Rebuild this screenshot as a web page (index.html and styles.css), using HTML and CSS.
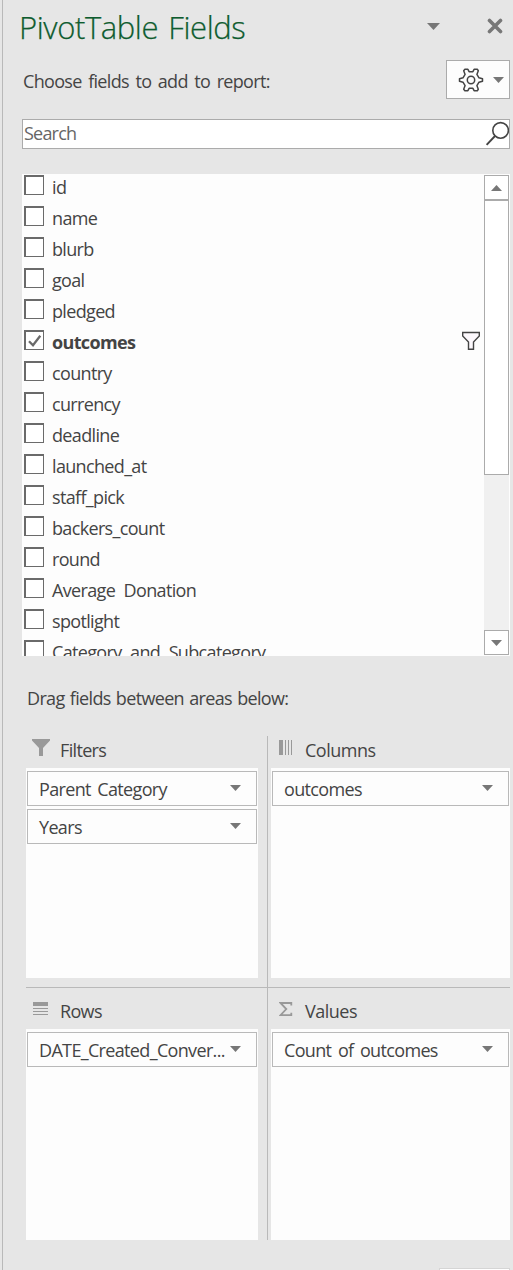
FILE: index.html
```html
<!DOCTYPE html>
<html lang="en">
<head>
<meta charset="utf-8">
<title>PivotTable Fields</title>
<link rel="stylesheet" href="styles.css">
</head>
<body>
<main class="pane">
  <header class="head">
    <h1 class="title">PivotTable Fields</h1>
    <svg class="head-arrow" width="14" height="7" viewBox="0 0 14 7"><path d="M0 0h13L6.500 7z" fill="#777"/></svg>
    <svg class="close" width="16" height="16" viewBox="0 0 16 16"><path d="M2.500 2.500l11 11M13.500 2.500l-11 11" stroke="#777" stroke-width="3.600" stroke-linecap="round"/></svg>
  </header>
  <div class="choose">
    <span class="choose-text">Choose fields to add to report:</span>
    <button class="gear">
      <svg width="26" height="24" viewBox="-13 -12 26 24" fill="none" stroke="#444" stroke-width="1.500" stroke-linejoin="round"><circle r="3.700"/><path d="M-6.100-10.700L-3.100-10.700L-1.900-8.300H1.900L3.100-10.700L6.300-10.700L7.300-9.300L5.900-5.600L8-2.200L11.500-1.200V1.200L8 2.200L5.900 5.600L7.300 9.300L6.300 10.700L3.100 10.700L1.900 8.300H-1.900L-3.100 10.700L-6.100 10.700L-7.300 9.300L-5.900 5.600L-8 2.200L-11.500 1.200V-1.200L-8-2.200L-5.900-5.600L-7.300-9.300Z"/></svg>
      <svg width="11" height="6" viewBox="0 0 11 6"><path d="M0 0h11L5.500 6z" fill="#777"/></svg>
    </button>
  </div>
  <div class="search">
    <span class="search-text">Search</span>
    <svg width="24" height="26" viewBox="0 0 24 26" fill="none" stroke="#444" stroke-width="1.600"><circle cx="15.600" cy="10.400" r="7.800"/><path d="M10 16L1.600 24.800" stroke-width="1.900"/></svg>
  </div>
  <section class="fields">
    <ul class="list">
      <li class="row"><i class="box"></i><span>id</span></li>
      <li class="row"><i class="box"></i><span>name</span></li>
      <li class="row"><i class="box"></i><span>blurb</span></li>
      <li class="row"><i class="box"></i><span>goal</span></li>
      <li class="row"><i class="box"></i><span>pledged</span></li>
      <li class="row checked"><i class="box"><svg width="17" height="17" viewBox="0 0 17 17" fill="none" stroke="#6a6a6a" stroke-width="2.300"><path d="M3 9.200L7 13.200L14.300 3.800"/></svg></i><span>outcomes</span>
        <svg class="funnel" width="20" height="20" viewBox="0 0 20 20"><path d="M1.700 1.500H18.300V5L12.500 11V18.300H7.500V11L1.700 5Z" fill="#fdf9fd" stroke="#444" stroke-width="1.400"/></svg></li>
      <li class="row"><i class="box"></i><span>country</span></li>
      <li class="row"><i class="box"></i><span>currency</span></li>
      <li class="row"><i class="box"></i><span>deadline</span></li>
      <li class="row"><i class="box"></i><span>launched_at</span></li>
      <li class="row"><i class="box"></i><span>staff_pick</span></li>
      <li class="row"><i class="box"></i><span>backers_count</span></li>
      <li class="row"><i class="box"></i><span>round</span></li>
      <li class="row"><i class="box"></i><span>Average Donation</span></li>
      <li class="row"><i class="box"></i><span>spotlight</span></li>
      <li class="row"><i class="box"></i><span>Category and Subcategory</span></li>
    </ul>
    <div class="scroll">
      <div class="step"><svg width="11" height="6" viewBox="0 0 11 6"><path d="M0 6h11L5.500 0z" fill="#777"/></svg></div>
      <div class="thumb"></div>
      <div class="step down"><svg width="11" height="6" viewBox="0 0 11 6"><path d="M0 0h11L5.500 6z" fill="#777"/></svg></div>
    </div>
  </section>
  <p class="drag">Drag fields between areas below:</p>
  <div class="areas">
    <section class="area">
      <h2 class="cap"><svg width="18" height="17" viewBox="0 0 18 17"><path d="M0 0H18V1.500L11 9V17H7V9L0 1.500Z" fill="#999"/></svg><span>Filters</span></h2>
      <div class="drop">
        <div class="item"><span>Parent Category</span><svg width="11" height="6" viewBox="0 0 11 6"><path d="M0 0h11L5.500 6z" fill="#777"/></svg></div>
        <div class="item"><span>Years</span><svg width="11" height="6" viewBox="0 0 11 6"><path d="M0 0h11L5.500 6z" fill="#777"/></svg></div>
      </div>
    </section>
    <section class="area right">
      <h2 class="cap"><svg width="14" height="16" viewBox="0 0 14 16"><path d="M0 1h4v15H0zM6 1h1v15H6zM9 1h1v15H9zM12 1h1v15h-1z" fill="#999"/></svg><span>Columns</span></h2>
      <div class="drop">
        <div class="item"><span>outcomes</span><svg width="11" height="6" viewBox="0 0 11 6"><path d="M0 0h11L5.500 6z" fill="#777"/></svg></div>
      </div>
    </section>
    <section class="area bottom">
      <h2 class="cap"><svg width="18" height="14" viewBox="0 0 18 14"><path d="M1 0h15v4H1zM1 6h15v1H1zM1 9h15v1H1zM1 12h15v1H1z" fill="#999"/></svg><span>Rows</span></h2>
      <div class="drop">
        <div class="item"><span>DATE_Created_Conver...</span><svg width="11" height="6" viewBox="0 0 11 6"><path d="M0 0h11L5.500 6z" fill="#777"/></svg></div>
      </div>
    </section>
    <section class="area right bottom">
      <h2 class="cap"><svg width="14" height="15" viewBox="0 0 14 15"><path d="M12.300 3.500V1H1.500L7.300 7L1.500 13.200H12.300V10.800" fill="none" stroke="#999" stroke-width="1.800"/></svg><span>Values</span></h2>
      <div class="drop">
        <div class="item"><span>Count of outcomes</span><svg width="11" height="6" viewBox="0 0 11 6"><path d="M0 0h11L5.500 6z" fill="#777"/></svg></div>
      </div>
    </section>
  </div>
  <footer class="foot"><div class="update"></div></footer>
</main>
</body>
</html>
```
FILE: styles.css
```css
* { box-sizing: border-box; }
body {
  margin: 0;
  background: #e6e6e6;
  color: #444;
  font: 18px/24px "Open Sans", "Noto Sans", sans-serif;
  letter-spacing: -0.66px;
  word-spacing: 2.5px;
  white-space: nowrap;
  overflow: hidden;
}
svg { display: block; flex: none; }
.pane {
  display: flex;
  flex-direction: column;
  height: 1270px;
  margin-left: 2px;
  border-left: 1px solid #b9b9b9;
}
.head { display: flex; height: 55px; padding-left: 16px; }
.title {
  width: 408px;
  margin: 0;
  color: #0e5c2f;
  font-size: 31px;
  font-weight: 300;
  line-height: 54px;
  letter-spacing: -0.4px;
  -webkit-text-stroke: 0.25px #0e5c2f;
}
.head-arrow { margin-top: 23px; }
.close { margin: 18px 0 0 46px; }
.choose {
  display: flex;
  justify-content: space-between;
  margin: 5px 3px 0 20px;
  height: 39px;
}
.choose-text { line-height: 42px; letter-spacing: -0.68px; }
.gear {
  display: flex;
  align-items: center;
  gap: 9px;
  width: 64px;
  padding: 0 0 0 11px;
  border: 1px solid #ababab;
  background: #fdfdfd;
}
.search {
  display: flex;
  justify-content: space-between;
  height: 30px;
  margin: 20px 3px 0 19px;
  padding-left: 1px;
  border: 1px solid #ababab;
  background: #fff;
}
.search-text { color: #666; line-height: 27px; letter-spacing: -0.8px; }
.fields {
  display: flex;
  height: 482px;
  margin: 25px 3px 0 19px;
  background: #fdfdfd;
  overflow: hidden;
}
.list { width: 462px; margin: 0; padding: 0 0 0 2px; list-style: none; word-spacing: 4.5px; }
.row { display: flex; height: 31px; line-height: 26px; }
.box {
  width: 20px;
  height: 20px;
  margin: 1px 8px 0 0;
  border: 1px solid #6a6a6a;
  border-width: 2px 1px 1px 2px;
  background: #fff;
}
.checked { font-weight: 700; }
.checked .funnel { margin: 2px 3px 0 auto; }
.scroll {
  display: flex;
  flex-direction: column;
  width: 25px;
  margin: 1px 0;
  background: #f0f0f0;
}
.step {
  display: flex;
  align-items: center;
  justify-content: center;
  height: 25px;
  border: 1px solid #ababab;
  background: #fff;
}
.thumb { height: 276px; margin-top: -1px; border: 1px solid #ababab; border-top-width: 2px; background: #fff; }
.down { margin-top: auto; }
.drag { margin: 30px 0 26px 24px; word-spacing: 1.2px; }
.areas {
  display: grid;
  grid-template-columns: 241px 243px;
  grid-template-rows: 251px 253px;
  margin-left: 23px;
}
.area { display: flex; flex-direction: column; padding: 0 9px 9px 0; }
.right { padding: 0 0 9px 3px; border-left: 1px solid #b9b9b9; }
.bottom { padding-bottom: 0; border-top: 1px solid #b9b9b9; }
.cap {
  display: flex;
  height: 32px;
  margin: 0;
  padding: 2px 0 0 6px;
  font-size: 18px;
  font-weight: 400;
}
.cap span { margin-left: 10px; }
.right .cap { padding-left: 8px; letter-spacing: -0.5px; }
.right .cap span { margin-left: 12px; }
.cap svg { margin-top: 1px; }
.bottom .cap { height: 41px; padding-top: 11px; }
.bottom .cap svg { margin-top: 3px; }
.drop { flex: 1; padding: 3px 1px 0; background: #fdfdfd; }
.item {
  display: flex;
  align-items: center;
  justify-content: space-between;
  height: 35px;
  margin-bottom: 3px;
  padding: 0 15px 0 11px;
  border: 1px solid #b9b9b9;
}
.item svg { margin-top: -2px; }
.foot { display: flex; justify-content: flex-end; margin: 28px 3px 0 0; }
.update { width: 71px; height: 2px; border: 1px solid #d5d5d5; border-bottom: 0; background: #fff; }
```
